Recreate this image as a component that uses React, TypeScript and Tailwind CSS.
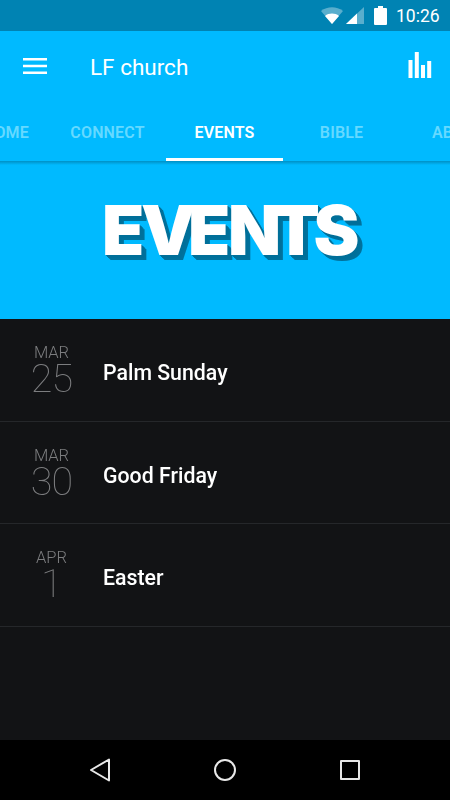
const tabs = ["WELCOME", "CONNECT", "EVENTS", "BIBLE", "ABOUT"]

const events = [
  { month: "MAR", day: "25", title: "Palm Sunday" },
  { month: "MAR", day: "30", title: "Good Friday" },
  { month: "APR", day: "1", title: "Easter" },
]

function StatusBar() {
  return (
    <div className="flex h-[31px] shrink-0 items-center justify-end bg-[#0083b3] pr-[10px]">
      <svg width="22" height="17" viewBox="0 0 22 17" fill="#fff">
        <path d="M0 4C6.500-1 15.500-1 22 4L11 17z" opacity=".35" />
        <path d="M4 9C8 5.800 14 5.800 18 9L11 17z" />
      </svg>
      <svg width="18" height="17" viewBox="0 0 18 17" fill="#fff" className="ml-[3px]">
        <path d="M0 17L18 0V17z" opacity=".35" />
        <path d="M0 17L11 6.600V17z" />
      </svg>
      <svg width="13" height="19" viewBox="0 0 13 19" fill="#fff" className="ml-[10px]">
        <path d="M4 0h5v2h3q1 0 1 1v15q0 1-1 1H1q-1 0-1-1V3q0-1 1-1h3z" />
      </svg>
      <span className="mt-0.5 ml-[9px] w-[44px] whitespace-nowrap text-[17.5px] leading-none text-white">10:26</span>
    </div>
  )
}

function Header() {
  return (
    <header className="h-[130px] shrink-0 overflow-hidden bg-[#00baff]">
      <div className="flex h-[72px] items-center pl-[23px] pr-[18px]">
        <svg width="24" height="16" viewBox="0 0 24 16" fill="#fff" className="-mt-0.5">
          <path d="M0 0h24v2.500H0zM0 6.700h24v2.500H0zM0 13.400h24v2.500H0z" />
        </svg>
        <h1 className="mt-0.5 ml-[43px] flex-1 text-[22.5px] font-normal text-white">LF church</h1>
        <svg width="24" height="26" viewBox="0 0 24 26" fill="#fff" className="-mt-1">
          <path d="M.5 8h4v18h-4zM6.800 0h4v26h-4zM13 13h4v13h-4zM19.200 9h4v17h-4z" />
        </svg>
      </div>
      <nav className="-ml-[68px] flex w-[585px]">
        {tabs.map((tab) => (
          <div
            key={tab}
            className={`flex h-[58px] w-[117px] shrink-0 items-center justify-center border-b-3 pt-1 text-[16px] font-semibold tracking-[0.15px] ${
              tab === "EVENTS" ? "border-white text-white" : "border-transparent text-[#66d9ff]"
            }`}
          >
            {tab}
          </div>
        ))}
      </nav>
    </header>
  )
}

function Banner() {
  return (
    <div className="h-[158px] shrink-0 bg-[#00baff] bg-linear-to-b from-[#0090c5] to-[#00baff] to-[4px]">
      <svg
        width="450"
        height="158"
        viewBox="0 0 450 158"
        fill="#fff"
        className="font-['Inter'] text-[69px] font-black [filter:drop-shadow(1px_1px_0_#006f99)_drop-shadow(2px_2px_0_#006f99)_drop-shadow(2px_2px_0_#00719c)]"
      >
        <text x="102 141 188 228 272.500 313.500" y="94">
          EVENTS
        </text>
      </svg>
    </div>
  )
}

export default function App() {
  return (
    <div className="flex h-[800px] w-[450px] flex-col overflow-hidden bg-[#121315] font-['Roboto',sans-serif]">
      <StatusBar />
      <Header />
      <Banner />

      {/* Event list */}
      <main className="flex-1 will-change-transform">
        {events.map((event) => (
          <div key={event.title} className="flex h-[102.700px] items-center border-b border-[#25272a]">
            <div className="w-[103px] text-center text-[#7c7d7f]">
              <div className="text-[16.5px] font-light leading-[18px]">{event.month}</div>
              <div className="text-[39.5px] font-thin leading-[34px] tracking-[-0.8px]">{event.day}</div>
            </div>
            <div className="mt-[6px] text-[21.3px] font-medium leading-8 text-white">{event.title}</div>
          </div>
        ))}
      </main>

      {/* System navigation */}
      <footer className="flex h-[60px] shrink-0 items-center justify-between bg-black px-[89px]">
        <svg width="22" height="24" viewBox="0 0 22 24" fill="none" stroke="#e8e8e8" strokeWidth="2" strokeLinejoin="round">
          <path d="M2 12L20 1.500V22.500z" />
        </svg>
        <svg width="22" height="22" viewBox="0 0 22 22" fill="none" stroke="#e8e8e8" strokeWidth="2">
          <circle cx="11" cy="11" r="10" />
        </svg>
        <svg width="22" height="22" viewBox="0 0 22 22" fill="none" stroke="#e8e8e8" strokeWidth="2" strokeLinejoin="round">
          <path d="M2 2h18v18H2z" />
        </svg>
      </footer>
    </div>
  )
}
